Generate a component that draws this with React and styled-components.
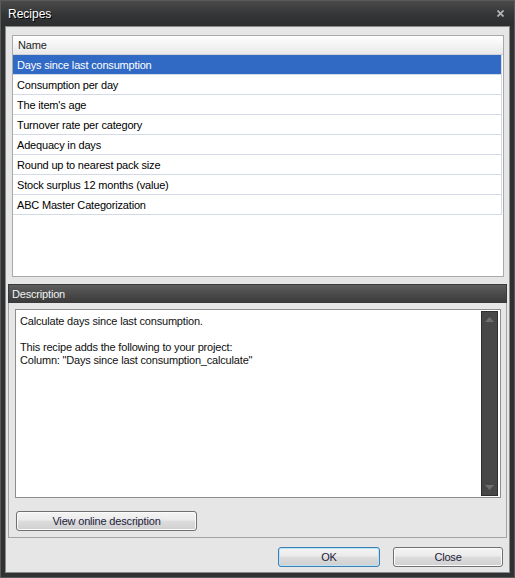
import React from "react";
import styled, { createGlobalStyle } from "styled-components";

const Global = createGlobalStyle`
  html, body { margin: 0; padding: 0; background: #2e2e2e; }
  body { font-family: "Liberation Sans", Arial, sans-serif; font-size: 11px; letter-spacing: -0.18px; }
`;

const Window = styled.div`
  width: 515px;
  height: 578px;
  box-sizing: border-box;
  border: 1px solid #5a5a5a;
  background: #2f3133;
  display: flex;
  flex-direction: column;
`;

const TitleBar = styled.div`
  height: 25px;
  flex: none;
  display: flex;
  align-items: center;
  justify-content: space-between;
  padding: 0 10px 0 7px;
  background: linear-gradient(#4a4a4a, #343536 55%, #2c2d2e);
`;

const Title = styled.span`
  color: #ffffff;
  font-size: 12px;
  letter-spacing: 0;
  text-shadow: 1px 1px 0 #000;
`;

const CloseGlyph = styled.svg`
  width: 7px;
  height: 7px;
  display: block;
`;

const Client = styled.div`
  flex: 1;
  margin: 0 4px 4px 4px;
  border: 1px solid #8a8a8a;
  background: #e6e6e6;
  display: flex;
  flex-direction: column;
  padding: 8px 0 5px 0;
  min-height: 0;
`;

const ListBox = styled.div`
  height: 242px;
  box-sizing: border-box;
  margin: 0 5px 0 6px;
  border: 1px solid #a9a9a9;
  background: #ffffff;
  flex: none;
`;

const ListHeader = styled.div`
  height: 19px;
  box-sizing: border-box;
  padding-left: 5px;
  display: flex;
  align-items: center;
  background: linear-gradient(#ffffff, #f4f4f4 50%, #e9e9e9);
  border-bottom: 1px solid #d2d2d2;
  color: #1e1e1e;
`;

const Row = styled.div`
  height: 20px;
  box-sizing: border-box;
  margin-right: 1px;
  padding-left: 4px;
  display: flex;
  align-items: center;
  border-bottom: 1px solid #d3d9e6;
  border-right: 1px solid #d3d9e6;
  background: ${(p) => (p.$selected ? "#316ac5" : "#ffffff")};
  color: ${(p) => (p.$selected ? "#ffffff" : "#000000")};
`;

const Section = styled.div`
  margin: 7px 2px 0 2px;
  flex: none;
  display: flex;
  flex-direction: column;
`;

const SectionHeader = styled.div`
  height: 19px;
  box-sizing: border-box;
  padding-left: 3px;
  display: flex;
  align-items: center;
  color: #f2f2f2;
  border: 1px solid #3a3a3a;
  border-bottom: none;
  background: linear-gradient(#5e5e5e, #4a4a4a 50%, #3a3a3a);
`;

const SectionBody = styled.div`
  border: 1px solid #a3a3a3;
  border-top: none;
  padding: 6px 5px 6px 6px;
  display: flex;
  flex-direction: column;
  align-items: flex-start;
`;

const TextBox = styled.div`
  align-self: stretch;
  height: 189px;
  box-sizing: border-box;
  border: 1px solid #8d8d8d;
  background: #ffffff;
  display: flex;
  padding: 1px 1px 1px 0;
`;

const TextContent = styled.div`
  flex: 1;
  padding: 4px 4px;
  line-height: 13px;
  color: #101010;
`;

const ScrollBar = styled.div`
  width: 17px;
  box-sizing: border-box;
  border: 1px solid #2e2e2e;
  background: #474747;
  display: flex;
  flex-direction: column;
  justify-content: space-between;
  align-items: center;
  padding: 5px 0;
  margin-right: 1px;
`;

const Arrow = styled.svg`
  width: 9px;
  height: 5px;
  display: block;
`;

const Button = styled.button`
  height: 20px;
  width: ${(p) => p.$w}px;
  box-sizing: border-box;
  border: 1px solid ${(p) => (p.$default ? "#3c7fb1" : "#707070")};
  border-radius: 3px;
  background: linear-gradient(#f4f4f4, #ebebeb 45%, #dddddd 50%, #cfcfcf);
  box-shadow: inset 0 0 0 1px ${(p) => (p.$default ? "#b9e3f9" : "#fbfbfb")};
  font-family: "Liberation Sans", Arial, sans-serif;
  font-size: 11px;
  letter-spacing: -0.18px;
  color: #1c1c3a;
  padding: 0;
  cursor: default;
`;

const LinkButton = styled(Button)`
  margin-top: 13px;
  margin-left: 1px;
`;

const Footer = styled.div`
  margin-top: auto;
  display: flex;
  justify-content: flex-end;
  gap: 13px;
  padding-right: 6px;
`;

const recipes = [
  "Days since last consumption",
  "Consumption per day",
  "The item's age",
  "Turnover rate per category",
  "Adequacy in days",
  "Round up to nearest pack size",
  "Stock surplus 12 months (value)",
  "ABC Master Categorization",
];

export default function App() {
  return (
    <>
      <Global />
      <Window>
        <TitleBar>
          <Title>Recipes</Title>
          <CloseGlyph viewBox="0 0 7 7">
            <path d="M0.5 0.5 L6.5 6.5 M6.5 0.5 L0.5 6.5" stroke="#b4b4b4" strokeWidth="1.8" />
          </CloseGlyph>
        </TitleBar>
        <Client>
          <ListBox>
            <ListHeader>Name</ListHeader>
            {recipes.map((r, i) => (
              <Row key={r} $selected={i === 0}>
                {r}
              </Row>
            ))}
          </ListBox>
          <Section>
            <SectionHeader>Description</SectionHeader>
            <SectionBody>
              <TextBox>
                <TextContent>
                  Calculate days since last consumption.
                  <br />
                  <br />
                  This recipe adds the following to your project:
                  <br />
                  Column: "Days since last consumption_calculate"
                </TextContent>
                <ScrollBar>
                  <Arrow viewBox="0 0 9 5">
                    <path d="M0 5 L4.5 0 L9 5 Z" fill="#6e6e6e" />
                  </Arrow>
                  <Arrow viewBox="0 0 9 5">
                    <path d="M0 0 L4.5 5 L9 0 Z" fill="#6e6e6e" />
                  </Arrow>
                </ScrollBar>
              </TextBox>
              <LinkButton $w={181}>View online description</LinkButton>
            </SectionBody>
          </Section>
          <Footer>
            <Button $w={102} $default>
              OK
            </Button>
            <Button $w={110}>Close</Button>
          </Footer>
        </Client>
      </Window>
    </>
  );
}
